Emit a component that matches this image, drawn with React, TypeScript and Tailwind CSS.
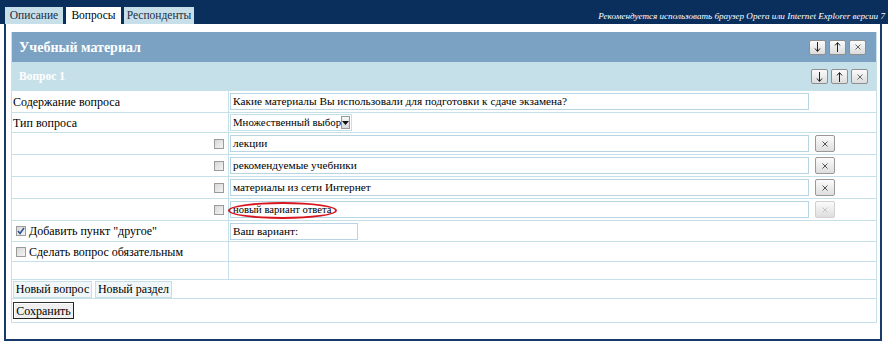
import React from "react";

const SmallBtn = ({ children }: { children: React.ReactNode }) => (
  <div className="w-[17px] h-[15px] flex items-center justify-center rounded-[2px] border border-[#8f8f8f] bg-gradient-to-b from-[#fbfbfb] to-[#dcdcdc]">
    {children}
  </div>
);

const Down = () => (
  <svg width="7" height="10" viewBox="0 0 7 10">
    <path d="M3.5 0 V9" stroke="#222" strokeWidth="1" />
    <path d="M1 6.5 L3.5 9.5 L6 6.5" fill="none" stroke="#222" strokeWidth="1" />
  </svg>
);
const Up = () => (
  <svg width="7" height="10" viewBox="0 0 7 10">
    <path d="M3.5 1 V10" stroke="#222" strokeWidth="1" />
    <path d="M1 3.5 L3.5 0.5 L6 3.5" fill="none" stroke="#222" strokeWidth="1" />
  </svg>
);
const X = ({ color }: { color: string }) => (
  <svg width="6" height="6" viewBox="0 0 6 6">
    <path d="M0.5 0.5 L5.5 5.5 M5.5 0.5 L0.5 5.5" stroke={color} strokeWidth="1" />
  </svg>
);

const ArrowBtns = () => (
  <div className="flex gap-[3px]">
    <SmallBtn>
      <Down />
    </SmallBtn>
    <SmallBtn>
      <Up />
    </SmallBtn>
    <SmallBtn>
      <X color="#666" />
    </SmallBtn>
  </div>
);

const DelBtn = ({ disabled }: { disabled?: boolean }) => (
  <div
    className={
      "w-[20px] h-[17px] flex items-center justify-center rounded-[2px] border bg-gradient-to-b from-[#fbfbfb] to-[#dedede] " +
      (disabled ? "border-[#d0d0d0]" : "border-[#999]")
    }
  >
    <X color={disabled ? "#c4c4c4" : "#555"} />
  </div>
);

const Check = ({ checked }: { checked?: boolean }) => (
  <div className="w-[10px] h-[10px] border border-[#9b9b9b] bg-gradient-to-br from-[#d8d8d8] to-[#f4f4f4] flex items-center justify-center shrink-0">
    {checked && (
      <svg width="8" height="8" viewBox="0 0 8 8">
        <path d="M1 4 L3 6.5 L7 1" fill="none" stroke="#2a4f9a" strokeWidth="1.5" />
      </svg>
    )}
  </div>
);

const Input = ({ w, children }: { w: string; children?: React.ReactNode }) => (
  <div
    className={
      "h-[17px] border border-[#b8d5e3] bg-white flex items-center px-[2px] whitespace-nowrap text-[11.3px] " + w
    }
  >
    {children}
  </div>
);

const Row = ({
  h,
  left,
  right,
}: {
  h: string;
  left?: React.ReactNode;
  right?: React.ReactNode;
}) => (
  <div className={"flex border-b border-[#c6e0e9] " + h}>
    <div className="w-[216px] flex items-center">{left}</div>
    <div className="flex-1 border-l border-[#c6e0e9] flex items-center pl-[1px]">{right}</div>
  </div>
);

export default function App() {
  const options = ["лекции", "рекомендуемые учебники", "материалы из сети Интернет"];
  return (
    <div className="w-[888px] h-[345px] bg-white overflow-hidden [font-family:'Liberation_Serif',serif] text-[12px] text-black">
      <div className="h-[24px] bg-[#0b2f5d] flex items-end pl-[5px] overflow-hidden">
        <div className="h-[17px] w-[58px] bg-[#c6dfe9] text-[#1d2d44] text-[11.5px] flex items-center justify-center">
          Описание
        </div>
        <div className="ml-[3px] h-[17px] w-[55px] bg-white text-black text-[11.5px] flex items-center justify-center">
          Вопросы
        </div>
        <div className="ml-[3px] h-[17px] w-[70px] bg-[#c6dfe9] text-[#1d2d44] text-[11.5px] flex items-center justify-center">
          Респонденты
        </div>
        <span className="ml-auto mr-[3px] mb-[3px] whitespace-nowrap italic text-white text-[9.1px] leading-none">
          Рекомендуется использовать браузер Opera или Internet Explorer версии 7
        </span>
      </div>
      <div className="ml-[4px] w-[878px] h-[317px] border-x-2 border-b-2 border-[#183a6a] pt-[8px] pl-[5px]">
        <div className="w-[866px] border-x border-b border-[#c6e0e9]">
          <div className="h-[30px] bg-[#7ba2c3] flex items-center justify-between pl-[7px] pr-[10px]">
            <span className="text-white font-bold text-[14px]">Учебный материал</span>
            <ArrowBtns />
          </div>
          <div className="h-[29px] bg-[#c6e0e9] flex items-center justify-between pl-[7px] pr-[8px]">
            <span className="text-white font-bold text-[11.5px]">Вопрос 1</span>
            <ArrowBtns />
          </div>
          <Row
            h="h-[22px]"
            left={<span className="pl-[1px]">Содержание вопроса</span>}
            right={<Input w="w-[579px]">Какие материалы Вы использовали для подготовки к сдаче экзамена?</Input>}
          />
          <Row
            h="h-[20px]"
            left={<span className="pl-[1px]">Тип вопроса</span>}
            right={
              <div className="h-[17px] w-[122px] border border-[#c6e0e9] flex items-center pl-[2px] text-[10.8px]">
                <span className="whitespace-nowrap">Множественный выбор</span>
                <div className="ml-auto mr-[1px] w-[12px] h-[13px] border border-[#999] bg-gradient-to-b from-[#f8f8f8] to-[#d8d8d8] flex items-center justify-center">
                  <svg width="7" height="4" viewBox="0 0 7 4">
                    <path d="M0 0 L7 0 L3.5 4 Z" fill="#111" />
                  </svg>
                </div>
              </div>
            }
          />
          {options.map((o) => (
            <Row
              key={o}
              h="h-[22px]"
              left={
                <div className="w-full flex justify-end pr-[4px]">
                  <Check />
                </div>
              }
              right={
                <div className="flex items-center">
                  <Input w="w-[579px]">{o}</Input>
                  <div className="ml-[6px]">
                    <DelBtn />
                  </div>
                </div>
              }
            />
          ))}
          <Row
            h="h-[22px]"
            left={
              <div className="w-full flex justify-end pr-[4px]">
                <Check />
              </div>
            }
            right={
              <div className="flex items-center relative">
                <Input w="w-[579px]">
                  <span className="text-[10.6px]">новый вариант ответа</span>
                </Input>
                <div className="ml-[6px]">
                  <DelBtn disabled />
                </div>
                <div className="absolute left-[-2px] top-[1px] w-[109px] h-[17px] rounded-[50%] border-2 border-[#d8141c]" />
              </div>
            }
          />
          <Row
            h="h-[21px]"
            left={
              <div className="flex items-center pl-[4px] gap-[3px]">
                <Check checked />
                <span>Добавить пункт "другое"</span>
              </div>
            }
            right={<Input w="w-[128px]">Ваш вариант:</Input>}
          />
          <Row
            h="h-[20px]"
            left={
              <div className="flex items-center pl-[4px] gap-[3px]">
                <Check />
                <span>Сделать вопрос обязательным</span>
              </div>
            }
          />
          <Row h="h-[18px]" />
          <div className="h-[19px] border-b border-[#c6e0e9] flex items-center pl-[1px] gap-[3px]">
            <div className="h-[17px] w-[79px] border border-[#c6e0e9] bg-[#f1f7f9] flex items-center justify-center">
              Новый вопрос
            </div>
            <div className="h-[17px] w-[77px] border border-[#c6e0e9] bg-[#f1f7f9] flex items-center justify-center">
              Новый раздел
            </div>
          </div>
          <div className="h-[23px] flex items-center pl-[1px]">
            <div className="h-[17px] w-[61px] border border-[#333] border-r-[#222] border-b-[#222] bg-[#efefef] flex items-center justify-center shadow-[inset_1px_1px_0_#fff]">
              Сохранить
            </div>
          </div>
        </div>
      </div>
    </div>
  );
}
